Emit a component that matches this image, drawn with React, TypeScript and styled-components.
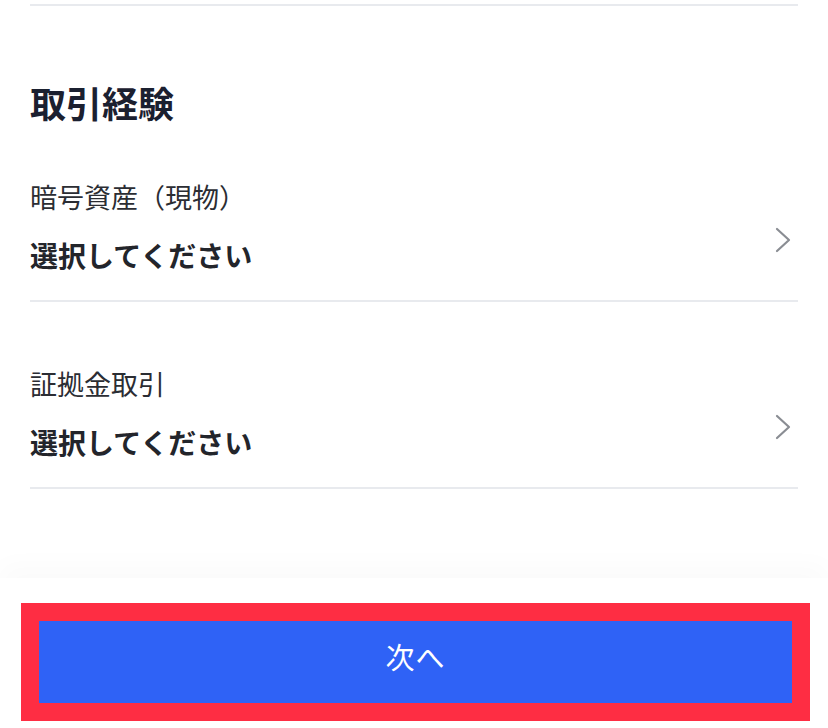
import React from 'react'
import styled, { createGlobalStyle } from 'styled-components'

const GlobalStyle = createGlobalStyle`
  html, body {
    margin: 0;
    padding: 0;
    background: #ffffff;
  }
  body {
    font-family: "Noto Sans CJK JP", "Noto Sans", sans-serif;
    -webkit-font-smoothing: antialiased;
  }
`

const Page = styled.div`
  width: 828px;
  height: 728px;
  display: flex;
  flex-direction: column;
  background: #ffffff;
  overflow: hidden;
`

const Content = styled.div`
  flex: 1;
  padding: 4px 30px 0;
`

const Divider = styled.div`
  height: 2px;
  background: #e8eaee;
`

const Title = styled.h2`
  margin: 71px 0 0;
  font-size: 36px;
  line-height: 50px;
  font-weight: 700;
  color: #1b2030;
`

const Row = styled.div<{ $first?: boolean }>`
  display: flex;
  align-items: center;
  padding-top: ${({ $first }) => ($first ? '50px' : '62px')};
  padding-bottom: 25px;
  border-bottom: 2px solid #e8eaee;
  cursor: pointer;
`

const RowText = styled.div`
  flex: 1;
  display: flex;
  flex-direction: column;
  gap: 18px;
`

const Label = styled.div`
  font-size: 27px;
  line-height: 40px;
  font-weight: 400;
  color: #2b2d33;
`

const Value = styled.div`
  font-size: 28px;
  line-height: 40px;
  font-weight: 700;
  color: #23252b;
`

const Chevron = styled.svg`
  width: 18px;
  height: 26px;
  margin: 28px 6px 0 0;
  flex-shrink: 0;
`

const Footer = styled.div`
  height: 150px;
  padding: 25px 18px 7px 21px;
  box-sizing: border-box;
  background: #ffffff;
  box-shadow: 0 -14px 24px rgba(20, 30, 60, 0.02);
`

const Highlight = styled.div`
  height: 118px;
  box-sizing: border-box;
  border: 18px solid #fe2d43;
  background: #fe2d43;
`

const NextButton = styled.button`
  display: block;
  width: 100%;
  height: 100%;
  border: 0;
  margin: 0;
  padding: 0 0 12px;
  background: #2f62f6;
  color: #ffffff;
  font-family: "Noto Sans CJK JP", "Noto Sans", sans-serif;
  font-size: 29px;
  font-weight: 400;
  letter-spacing: 1px;
  cursor: pointer;
`

const items = [
  { label: '暗号資産（現物）', value: '選択してください' },
  { label: '証拠金取引', value: '選択してください' },
]

const App = () => {
  return (
    <Page>
      <GlobalStyle />
      <Content>
        <Divider />
        <Title>取引経験</Title>
        {items.map((item, i) => (
          <Row key={item.label} $first={i === 0}>
            <RowText>
              <Label>{item.label}</Label>
              <Value>{item.value}</Value>
            </RowText>
            <Chevron viewBox="0 0 18 26" fill="none">
              <path d="M3 2 L15 13 L3 24" stroke="#8a8d93" strokeWidth="2.2" strokeLinecap="round" strokeLinejoin="round" />
            </Chevron>
          </Row>
        ))}
      </Content>
      <Footer>
        <Highlight>
          <NextButton>次へ</NextButton>
        </Highlight>
      </Footer>
    </Page>
  )
}

export default App
